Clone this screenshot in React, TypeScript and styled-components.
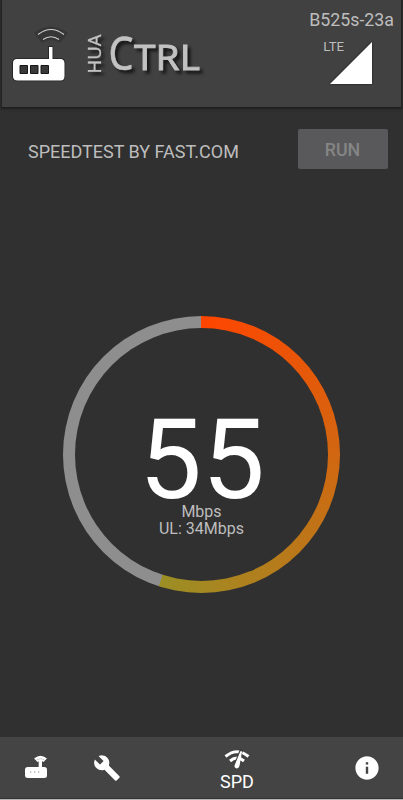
import React from "react";
import styled, { createGlobalStyle } from "styled-components";
import { MdBuild, MdInfo } from "react-icons/md";

const GlobalStyle = createGlobalStyle`
  * { box-sizing: border-box; }
  body { margin: 0; background: #303030; font-family: Roboto, sans-serif; color: #bdbdbd; }
`;

const Screen = styled.div`
  display: flex;
  flex-direction: column;
  width: 403px;
  height: 800px;
  overflow: hidden;
  background: #303030;
`;

const Header = styled.header`
  display: flex;
  justify-content: space-between;
  height: 107px;
  margin: 0 2px;
  background: #414141;
  box-shadow: 0 1px 2px 1px #1f1f1f;
`;

const Brand = styled.svg`
  display: block;
  width: 210px;
  height: 107px;
`;

const Wordmark = styled.g`
  font-family: "Noto Sans", sans-serif;
  fill: #c2c2c2;
  stroke: #c2c2c2;
  filter: drop-shadow(3px 3px 1.5px rgba(0, 0, 0, 0.65));
`;

const Device = styled.div`
  display: flex;
  flex-direction: column;
  align-items: flex-end;
  padding: 9px 7px 0 0;
`;

const Model = styled.div`
  font-size: 17.8px;
  line-height: 21px;
`;

const Signal = styled.div`
  display: flex;
  align-items: flex-start;
  margin: 8px 22px 0 0;
`;

const NetworkType = styled.span`
  font-size: 13.2px;
  line-height: 17px;
  margin-right: -18px;
`;

const SignalIcon = styled.svg`
  display: block;
  width: 46px;
  height: 48px;
  filter: drop-shadow(0 0 1px #1c1c1c);
`;

const TestBar = styled.section`
  display: flex;
  align-items: center;
  justify-content: space-between;
  margin: 21px 15.5px 0 28px;
  height: 42px;
`;

const Title = styled.h1`
  margin: 5px 0 0;
  font-size: 18px;
  font-weight: 400;
`;

const RunButton = styled.button`
  width: 90px;
  height: 40px;
  border: 0;
  border-radius: 2px;
  background: #59595b;
  color: #858585;
  font: 500 17.8px Roboto, sans-serif;
`;

const Gauge = styled.main`
  display: grid;
  place-items: center;
  width: 277px;
  height: 277px;
  margin: 146px 0 0 63px;
  border-radius: 50%;
  background: conic-gradient(#ff4500 0, #9b8f25 55%, #8e8e8e 55%);
`;

const GaugeFace = styled.div`
  display: flex;
  flex-direction: column;
  align-items: center;
  width: 253px;
  height: 253px;
  padding-top: 89px;
  border-radius: 50%;
  background: #303030;
`;

const Speed = styled.div`
  font-size: 112px;
  line-height: 86px;
  color: #fff;
  padding-left: 1px;
`;

const Unit = styled.div`
  font-size: 16px;
  line-height: 17px;
`;

const TabBar = styled.nav`
  display: flex;
  align-items: center;
  height: 63px;
  margin-top: auto;
  background: #444;
  border-bottom: 1px solid #b5b5b5;
  box-shadow: inset 0 -1px #333;
`;

const Tab = styled.a<{ $width: number }>`
  display: flex;
  flex-direction: column;
  align-items: center;
  justify-content: center;
  width: ${(p) => p.$width}px;
  color: #fff;
  font-size: 18px;
  line-height: 20px;
  svg { filter: drop-shadow(0 0 0.7px #151515); }
`;

const TabLabel = styled.span`
  padding-left: 1px;
`;

const Spacer = styled.div`
  flex: 1;
`;

const RouterIcon = () => (
  <svg width="26" height="26" viewBox="0 0 26 26" fill="none">
    <rect x="2" y="12" width="22" height="11" rx="2.5" fill="#fff" />
    <path d="M17.3 13V6" stroke="#fff" strokeWidth="3.4" />
    <path d="M11 3.5Q17.5-2 24 3.5L20.5 7Q17.5 5 14.5 7Z" fill="#fff" />
    <path d="M13.500 4.800Q17.500 2.500 21.500 4.800" stroke="#bbb" strokeWidth=".7" />
    <path d="M7 17h1.3M11 17h1.3M15 17h1.3" stroke="#888" strokeWidth="1.2" />
  </svg>
);

const SpeedIcon = () => (
  <svg width="27" height="28" viewBox="0 -3 27 28" fill="none" stroke="#fff">
    <path d="M2.500 9.500Q14 0 25.500 9.500" strokeWidth="3" />
    <path d="M7 14Q14 8 21 14" strokeWidth="3" />
    <path d="M18.500 3L13 17" stroke="#444" strokeWidth="3.5" />
    <path d="M17.300 4.500Q18.500 3.500 19 5L16.500 19Q15.700 21.900 13.300 21.400Q10.800 20.500 11.700 18Z" fill="#fff" stroke="none" />
  </svg>
);

const Logo = () => (
  <Brand viewBox="2 0 210 107">
    <path d="M34 33Q50 20 68 33L60 43Q51 37 42 43Z" fill="#363636" />
    <path d="M38 34.5Q51 24.5 64 34.5M43 39.5Q51 34 59 39.5" fill="none" stroke="#d0d0d0" strokeWidth="1.1" />
    <path
      d="M17 59H49V47h3.5v12h8Q64.500 59 64.500 63.500V76Q64.500 80.500 60.500 80.500H17.500Q13 80.500 13 76V63Q13 59 17 59Z"
      fill="#fff"
      stroke="#222"
      strokeWidth="1.6"
      paintOrder="stroke"
    />
    <path d="M20 65.500h7.500v8H20ZM30.500 65.500H38v8h-7.500ZM41 65.500h7.500v8H41Z" fill="#393939" stroke="#171717" />
    <Wordmark>
      <text transform="translate(101 73.500) rotate(-90)" fontSize="18" textLength="39" lengthAdjust="spacingAndGlyphs" strokeWidth=".3">HUA</text>
      <text x="108.500" y="70" fontSize="45.500" textLength="25" lengthAdjust="spacingAndGlyphs" strokeWidth=".6">C</text>
      <text x="134" y="70" fontSize="35" textLength="66" lengthAdjust="spacingAndGlyphs" strokeWidth=".8">TRL</text>
    </Wordmark>
  </Brand>
);

export default function App() {
  return (
    <>
      <GlobalStyle />
      <Screen>
        <Header>
          <Logo />
          <Device>
            <Model>B525s-23a</Model>
            <Signal>
              <NetworkType>LTE</NetworkType>
              <SignalIcon viewBox="0 0 46 48">
                <path d="M46 4V46H4Z" fill="#fff" />
              </SignalIcon>
            </Signal>
          </Device>
        </Header>
        <TestBar>
          <Title>SPEEDTEST BY FAST.COM</Title>
          <RunButton disabled>RUN</RunButton>
        </TestBar>
        <Gauge>
          <GaugeFace>
            <Speed>55</Speed>
            <Unit>Mbps</Unit>
            <Unit>UL: 34Mbps</Unit>
          </GaugeFace>
        </Gauge>
        <TabBar>
          <Tab $width={72}><RouterIcon /></Tab>
          <Tab $width={70}><MdBuild size={28} /></Tab>
          <Spacer />
          <Tab $width={70}><SpeedIcon /><TabLabel>SPD</TabLabel></Tab>
          <Spacer />
          <Tab $width={72}><MdInfo size={28} /></Tab>
        </TabBar>
      </Screen>
    </>
  );
}
